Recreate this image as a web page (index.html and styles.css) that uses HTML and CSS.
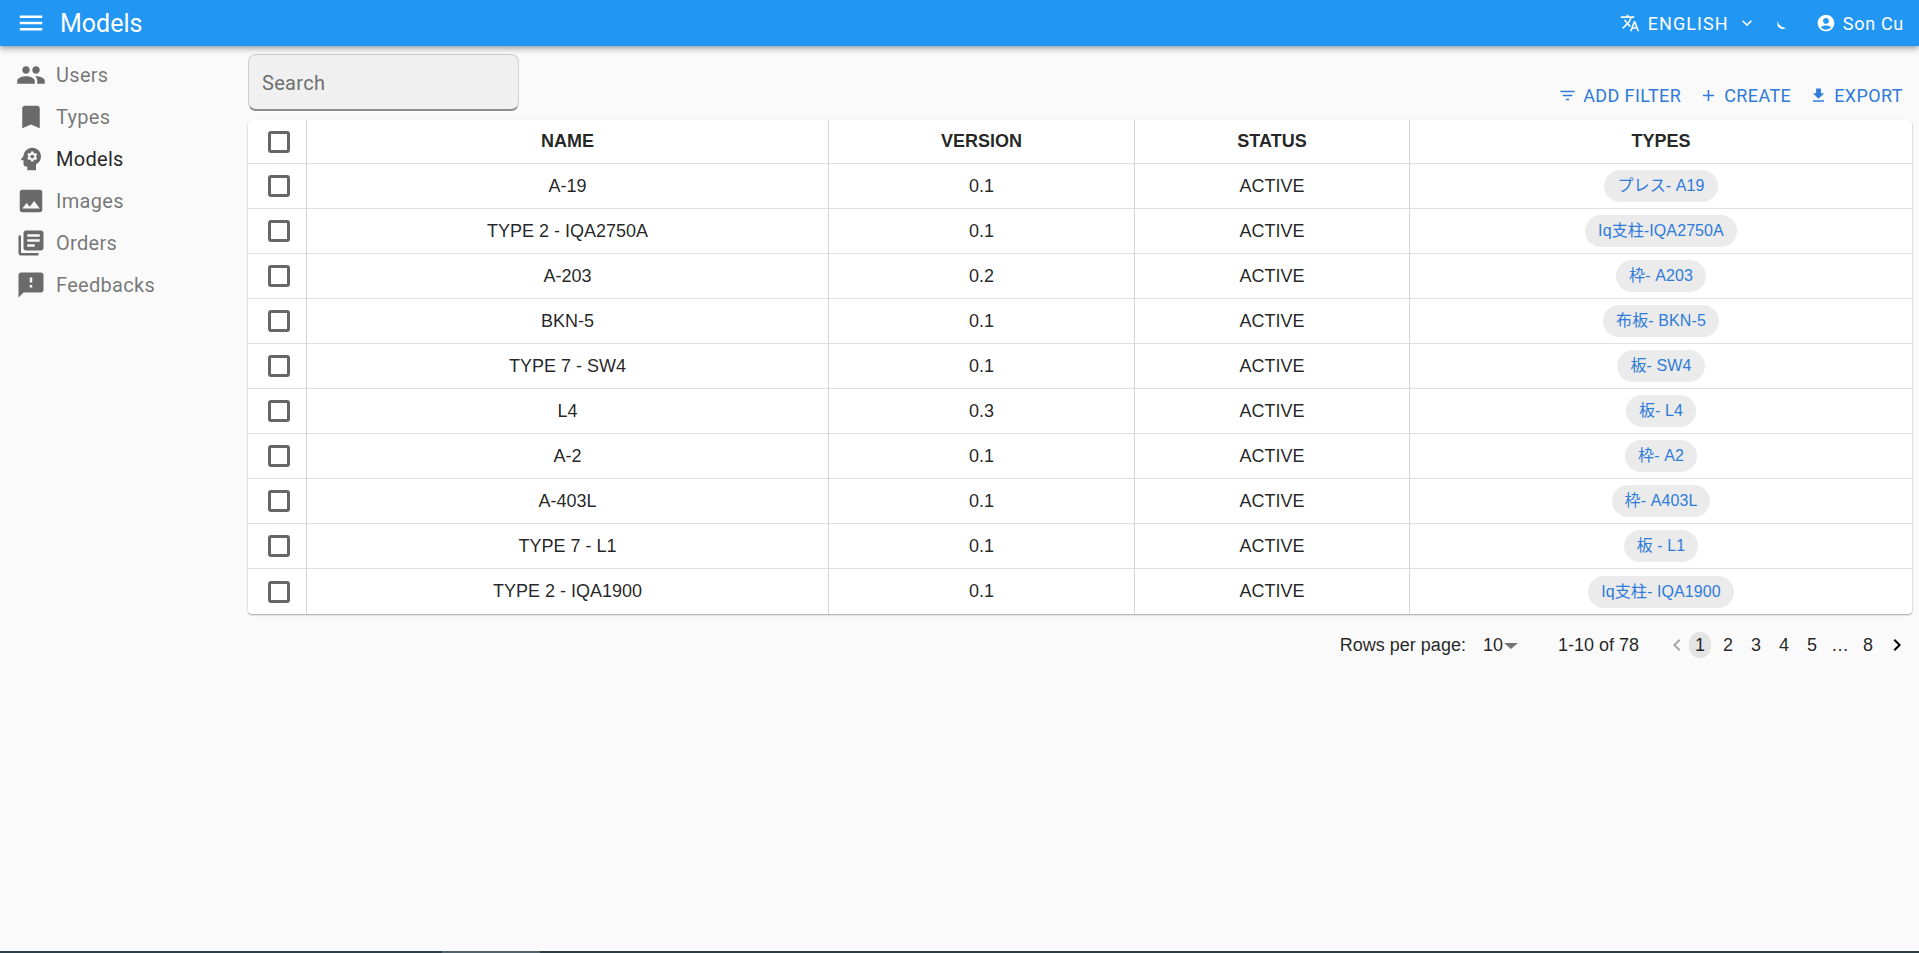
FILE: index.html
```html
<!DOCTYPE html>
<html lang="en">
<head>
    <meta charset="UTF-8">
    <meta name="viewport" content="width=device-width, initial-scale=1.0">
    <title>Models</title>
    <link rel="stylesheet" href="styles.css">
</head>
<body>
    <header class="appbar">
        <svg class="menu-icon" viewBox="0 0 24 24"><path d="M3 18h18v-2H3v2zm0-5h18v-2H3v2zm0-7v2h18V6H3z"/></svg>
        <div class="appbar-title">Models</div>
        <div class="lang">
            <svg viewBox="0 0 24 24"><path d="M12.87 15.07l-2.54-2.51.03-.03c1.74-1.94 2.98-4.17 3.71-6.53H17V4h-7V2H8v2H1v1.99h11.17C11.5 7.92 10.44 9.75 9 11.35 8.07 10.32 7.3 9.19 6.69 8h-2c.73 1.63 1.73 3.17 2.98 4.56l-5.09 5.02L4 19l5-5 3.11 3.11.76-2.04zM18.5 10h-2L12 22h2l1.12-3h4.75L21 22h2l-4.5-12zm-2.62 7l1.62-4.33L19.12 17h-3.24z"/></svg>
            <span>ENGLISH</span>
            <svg class="chevron" viewBox="0 0 24 24"><path d="M7.41 8.59L12 13.17l4.59-4.58L18 10l-6 6-6-6 1.41-1.41z"/></svg>
        </div>
        <svg class="moon" viewBox="0 0 24 24"><path d="M6 6c1 5 4 9 11 10-3 3-9 1-11-3z"/></svg>
        <div class="user">
            <svg viewBox="0 0 24 24"><path d="M12 2C6.48 2 2 6.48 2 12s4.48 10 10 10 10-4.48 10-10S17.52 2 12 2zm0 4c1.93 0 3.5 1.57 3.5 3.5S13.93 13 12 13s-3.5-1.57-3.5-3.5S10.07 6 12 6zm0 14c-2.03 0-4.43-.82-6.14-2.88C7.55 15.8 9.68 15 12 15s4.45.8 6.14 2.12C16.43 19.18 14.03 20 12 20z"/></svg>
            <span>Son Cu</span>
        </div>
    </header>

    <div class="layout">
        <nav class="sidebar">
            <a class="nav-item">
                <svg viewBox="0 0 24 24"><path d="M16 11c1.66 0 2.99-1.34 2.99-3S17.66 5 16 5c-1.66 0-3 1.34-3 3s1.34 3 3 3zm-8 0c1.66 0 2.99-1.34 2.99-3S9.66 5 8 5C6.34 5 5 6.34 5 8s1.34 3 3 3zm0 2c-2.33 0-7 1.17-7 3.5V19h14v-2.5c0-2.33-4.67-3.5-7-3.5zm8 0c-.29 0-.62.02-.97.05 1.16.84 1.97 1.97 1.97 3.45V19h6v-2.5c0-2.33-4.67-3.5-7-3.5z"/></svg>
                Users
            </a>
            <a class="nav-item">
                <svg viewBox="0 0 24 24"><path d="M17 3H7c-1.1 0-2 .9-2 2v16l7-3 7 3V5c0-1.1-.9-2-2-2z"/></svg>
                Types
            </a>
            <a class="nav-item active">
                <svg viewBox="0 0 24 24"><path fill-rule="evenodd" d="M13 3C9.25 3 6.2 5.94 6.02 9.64L4.1 12.2c-.25.33 0 .8.4.8H6v3c0 1.1.9 2 2 2h1v3h7v-4.68c2.36-1.12 4-3.53 4-6.32 0-3.87-3.13-7-7-7zm3 7c0 .13-.01.26-.03.39l.83.66c.08.06.1.16.05.25l-.8 1.39c-.05.09-.16.12-.24.09l-.99-.4c-.21.16-.43.29-.67.39L14 13.83c-.01.1-.1.17-.2.17h-1.6c-.1 0-.18-.07-.2-.17l-.15-1.06c-.25-.1-.47-.23-.68-.39l-.99.4c-.09.03-.2 0-.25-.09l-.8-1.39c-.05-.08-.03-.19.05-.25l.84-.66c-.01-.13-.02-.26-.02-.39s.02-.27.04-.39l-.85-.66c-.08-.06-.1-.16-.05-.26l.8-1.38c.05-.09.15-.12.24-.09l1 .4c.2-.15.43-.29.67-.39L12 6.17c.02-.1.1-.17.2-.17h1.6c.1 0 .18.07.2.17l.15 1.06c.24.1.46.23.67.39l1-.4c.09-.03.2 0 .24.09l.8 1.38c.05.09.03.2-.05.26l-.85.66c.03.12.04.25.04.39zM13 8.5c-.83 0-1.5.67-1.5 1.5s.67 1.5 1.5 1.5 1.5-.67 1.5-1.5-.67-1.5-1.5-1.5z"/></svg>
                Models
            </a>
            <a class="nav-item">
                <svg viewBox="0 0 24 24"><path d="M21 19V5c0-1.1-.9-2-2-2H5c-1.1 0-2 .9-2 2v14c0 1.1.9 2 2 2h14c1.1 0 2-.9 2-2zM8.5 13.5l2.5 3.01L14.5 12l4.5 6H5l3.5-4.5z"/></svg>
                Images
            </a>
            <a class="nav-item">
                <svg viewBox="0 0 24 24"><path d="M4 6H2v14c0 1.1.9 2 2 2h14v-2H4V6zm16-4H8c-1.1 0-2 .9-2 2v12c0 1.1.9 2 2 2h12c1.1 0 2-.9 2-2V4c0-1.1-.9-2-2-2zm-1 9H9V9h10v2zm-4 4H9v-2h6v2zm4-8H9V5h10v2z"/></svg>
                Orders
            </a>
            <a class="nav-item">
                <svg viewBox="0 0 24 24"><path d="M20 2H4c-1.1 0-1.99.9-1.99 2L2 22l4-4h14c1.1 0 2-.9 2-2V4c0-1.1-.9-2-2-2zm-7 12h-2v-2h2v2zm0-4h-2V6h2v4z"/></svg>
                Feedbacks
            </a>
        </nav>

        <main class="content">
            <div class="toolbar">
                <div class="search">Search</div>
                <div class="actions">
                    <a class="action">
                        <svg viewBox="0 0 24 24"><path d="M10 18h4v-2h-4v2zM3 6v2h18V6H3zm3 7h12v-2H6v2z"/></svg>
                        ADD FILTER
                    </a>
                    <a class="action">
                        <svg viewBox="0 0 24 24"><path d="M19 13h-6v6h-2v-6H5v-2h6V5h2v6h6v2z"/></svg>
                        CREATE
                    </a>
                    <a class="action">
                        <svg viewBox="0 0 24 24"><path d="M19 9h-4V3H9v6H5l7 7 7-7zM5 18v2h14v-2H5z"/></svg>
                        EXPORT
                    </a>
                </div>
            </div>

            <table class="grid">
                <thead>
                    <tr>
                        <th class="col-check"><span class="checkbox"></span></th>
                        <th class="col-name">NAME</th>
                        <th class="col-version">VERSION</th>
                        <th class="col-status">STATUS</th>
                        <th>TYPES</th>
                    </tr>
                </thead>
                <tbody>
                    <tr><td><span class="checkbox"></span></td><td>A-19</td><td>0.1</td><td>ACTIVE</td><td><span class="chip">プレス- A19</span></td></tr>
                    <tr><td><span class="checkbox"></span></td><td>TYPE 2 - IQA2750A</td><td>0.1</td><td>ACTIVE</td><td><span class="chip">Iq支柱-IQA2750A</span></td></tr>
                    <tr><td><span class="checkbox"></span></td><td>A-203</td><td>0.2</td><td>ACTIVE</td><td><span class="chip">枠- A203</span></td></tr>
                    <tr><td><span class="checkbox"></span></td><td>BKN-5</td><td>0.1</td><td>ACTIVE</td><td><span class="chip">布板- BKN-5</span></td></tr>
                    <tr><td><span class="checkbox"></span></td><td>TYPE 7 - SW4</td><td>0.1</td><td>ACTIVE</td><td><span class="chip">板- SW4</span></td></tr>
                    <tr><td><span class="checkbox"></span></td><td>L4</td><td>0.3</td><td>ACTIVE</td><td><span class="chip">板- L4</span></td></tr>
                    <tr><td><span class="checkbox"></span></td><td>A-2</td><td>0.1</td><td>ACTIVE</td><td><span class="chip">枠- A2</span></td></tr>
                    <tr><td><span class="checkbox"></span></td><td>A-403L</td><td>0.1</td><td>ACTIVE</td><td><span class="chip">枠- A403L</span></td></tr>
                    <tr><td><span class="checkbox"></span></td><td>TYPE 7 - L1</td><td>0.1</td><td>ACTIVE</td><td><span class="chip">板 - L1</span></td></tr>
                    <tr><td><span class="checkbox"></span></td><td>TYPE 2 - IQA1900</td><td>0.1</td><td>ACTIVE</td><td><span class="chip">Iq支柱- IQA1900</span></td></tr>
                </tbody>
            </table>

            <div class="pagination">
                <span class="rows-label">Rows per page:</span>
                <span class="rows-select">10<i class="caret"></i></span>
                <span class="range">1-10 of 78</span>
                <div class="pages">
                    <svg class="arrow disabled" viewBox="0 0 24 24"><path d="M15.41 7.41L14 6l-6 6 6 6 1.41-1.41L10.83 12z"/></svg>
                    <span class="page current">1</span>
                    <span class="page">2</span>
                    <span class="page">3</span>
                    <span class="page">4</span>
                    <span class="page">5</span>
                    <span class="page">…</span>
                    <span class="page">8</span>
                    <svg class="arrow" viewBox="0 0 24 24"><path d="M10 6L8.59 7.41 13.17 12l-4.58 4.59L10 18l6-6z"/></svg>
                </div>
            </div>
        </main>
    </div>

    <div class="taskbar">
        <div class="taskbar-a"></div>
        <div class="taskbar-b"></div>
        <div class="taskbar-c"></div>
    </div>
</body>
</html>
```

FILE: styles.css
```css
* {
    box-sizing: border-box;
}
html, body {
    height: 100%;
}
body {
    margin: 0;
    height: 953px;
    overflow: hidden;
    display: flex;
    flex-direction: column;
    background: #fafafa;
    font-family: Roboto, sans-serif;
    color: rgba(0,0,0,0.87);
}

/* top bar */
.appbar {
    height: 46px;
    flex: none;
    display: flex;
    align-items: center;
    background: #2196f3;
    color: white;
    box-shadow: 0 2px 4px -1px rgba(0,0,0,0.2), 0 4px 5px 0 rgba(0,0,0,0.14), 0 1px 10px 0 rgba(0,0,0,0.12);
    position: relative;
    z-index: 2;
    padding-right: 15px;
}
.appbar svg {
    fill: white;
}
.menu-icon {
    width: 30px;
    height: 30px;
    margin-left: 16px;
}
.appbar-title {
    margin-left: 14px;
    font-size: 25px;
    flex: 1;
}
.lang {
    display: flex;
    align-items: center;
    font-size: 18px;
    letter-spacing: 1.1px;
}
.lang svg {
    width: 20px;
    height: 20px;
    margin-right: 8px;
}
.lang .chevron {
    margin-left: 8px;
    margin-right: 0;
}
.moon {
    width: 18px;
    height: 18px;
    margin: 3px 0 0 16px;
}
.user {
    display: flex;
    align-items: center;
    margin-left: 25px;
    font-size: 18px;
    letter-spacing: 0.7px;
}
.user svg {
    width: 20px;
    height: 20px;
    margin-right: 7px;
}

.layout {
    flex: 1;
    display: flex;
}

/* side menu */
.sidebar {
    width: 248px;
    flex: none;
    padding-top: 8px;
}
.nav-item {
    height: 42px;
    display: flex;
    align-items: center;
    padding-left: 16px;
    padding-bottom: 1px;
    font-size: 20px;
    letter-spacing: 0.3px;
    color: rgba(0,0,0,0.54);
}
.nav-item svg {
    width: 30px;
    height: 30px;
    margin-right: 10px;
    fill: #6a6a6a;
}
.nav-item.active {
    color: rgba(0,0,0,0.87);
}

/* main */
.content {
    flex: 1;
    padding: 8px 7px 0 0;
}
.toolbar {
    height: 66px;
    display: flex;
    justify-content: space-between;
}
.search {
    width: 271px;
    height: 57px;
    padding: 16px 13px;
    background: #f0f0f0;
    border: 1px solid #cfcfcf;
    border-bottom: 2px solid #8c8c8c;
    border-radius: 8px;
    font-size: 20px;
    letter-spacing: 0.3px;
    line-height: 24px;
    color: #6f6f6f;
}
.actions {
    display: flex;
    align-items: flex-end;
    padding-bottom: 13px;
}
.action {
    display: flex;
    align-items: center;
    height: 24px;
    margin-left: 9px;
    padding-right: 9px;
    font-size: 18px;
    letter-spacing: 0.4px;
    color: #2f7bd9;
}
.action svg {
    width: 19px;
    height: 19px;
    margin-right: 6px;
    fill: #2f7bd9;
}

/* table */
.grid {
    width: 100%;
    table-layout: fixed;
    border-collapse: separate;
    border-spacing: 0;
    background: white;
    border-radius: 4px;
    box-shadow: 0 1px 2px rgba(0,0,0,0.35);
    font-family: "Liberation Sans", "Noto Sans CJK JP", sans-serif;
    font-size: 18px;
}
.col-check {
    width: 59px;
}
.col-name {
    width: 522px;
}
.col-version {
    width: 306px;
}
.col-status {
    width: 275px;
}
.grid th, .grid td {
    height: 45px;
    padding: 0;
    text-align: center;
    border-bottom: 1px solid #e0e0e0;
    border-right: 1px solid #d4d4d4;
}
.grid th {
    height: 44px;
    font-weight: bold;
}
.grid th:last-child, .grid td:last-child {
    border-right: none;
}
.grid tbody tr:last-child td {
    border-bottom: none;
}
.checkbox {
    display: block;
    width: 22px;
    height: 22px;
    margin: 0 0 0 20px;
    border: 3px solid #666;
    border-radius: 3px;
}
.chip {
    display: inline-block;
    height: 32px;
    line-height: 32px;
    padding: 0 13px;
    border-radius: 16px;
    background: #ebebeb;
    color: #2f7bd9;
    font-size: 16px;
    letter-spacing: 0.1px;
    vertical-align: middle;
}

/* pagination */
.pagination {
    height: 62px;
    padding-right: 3px;
    display: flex;
    align-items: center;
    justify-content: flex-end;
    font-family: "Liberation Sans", sans-serif;
    font-size: 18px;
}
.rows-select {
    display: flex;
    align-items: center;
    margin-left: 17px;
}
.caret {
    width: 0;
    height: 0;
    margin: 2px 0 0 1px;
    border-left: 7px solid transparent;
    border-right: 7px solid transparent;
    border-top: 6px solid #757575;
}
.range {
    margin-left: 40px;
}
.pages {
    display: flex;
    align-items: center;
    margin-left: 26px;
}
.arrow {
    width: 24px;
    height: 24px;
}
.arrow.disabled {
    fill: #a8a8a8;
}
.page {
    width: 22px;
    height: 26px;
    margin-right: 6px;
    line-height: 26px;
    text-align: center;
    border-radius: 11px;
}
.page.current {
    background: #e4e4e4;
}

.taskbar {
    height: 2px;
    flex: none;
    display: flex;
}
.taskbar-a {
    width: 442px;
    background: #2a3f47;
}
.taskbar-b {
    width: 98px;
    background: #50636b;
}
.taskbar-c {
    flex: 1;
    background: #2c3e44;
}
```
